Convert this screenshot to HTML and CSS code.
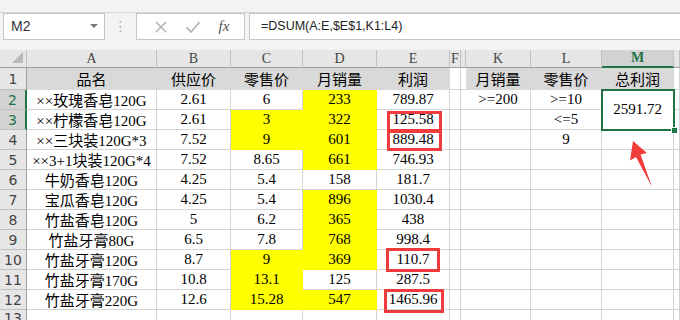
FILE: index.html
```html
<!DOCTYPE html>
<html lang="zh">

<head>
  <meta charset="UTF-8">
  <meta name="viewport" content="width=device-width, initial-scale=1.0">
  <title>DSUM 多条件求和</title>
  <link rel="stylesheet" href="styles.css">
</head>

<body>
  <!-- 编辑栏 -->
  <div class="ribbon"></div>
  <div class="fbar">
    <div class="namebox">M2<span class="caret"></span></div>
    <div class="grip">⋮</div>
    <div class="fx-buttons">
      <svg class="btn-icon" width="14" height="14" viewBox="0 0 14 14">
        <path d="M2 2 L12 12 M12 2 L2 12" stroke="#b5b5b5" stroke-width="1.6" fill="none" />
      </svg>
      <svg class="btn-icon" width="16" height="14" viewBox="0 0 16 14">
        <path d="M1.5 7.5 L6 12 L14.5 2" stroke="#b5b5b5" stroke-width="1.8" fill="none" />
      </svg>
      <span class="fx">fx</span>
    </div>
    <div class="formula">=DSUM(A:E,$E$1,K1:L4)</div>
  </div>

  <!-- 工作表 -->
  <div class="sheet">
    <div class="ch corner"><span class="tri"></span></div>
    <div class="ch">A</div>
    <div class="ch">B</div>
    <div class="ch">C</div>
    <div class="ch">D</div>
    <div class="ch">E</div>
    <div class="ch">F</div>
    <div class="ch"></div>
    <div class="ch">K</div>
    <div class="ch">L</div>
    <div class="ch sel">M</div>
    <div class="ch"></div>

    <div class="rh">1</div>
    <div class="c g">品名</div>
    <div class="c g">供应价</div>
    <div class="c g">零售价</div>
    <div class="c g">月销量</div>
    <div class="c g">利润</div>
    <div class="c"></div>
    <div class="c gap"></div>
    <div class="c g">月销量</div>
    <div class="c g">零售价</div>
    <div class="c g">总利润</div>
    <div class="c"></div>

    <div class="rh sel">2</div>
    <div class="c">××玫瑰香皂120G</div>
    <div class="c">2.61</div>
    <div class="c">6</div>
    <div class="c y">233</div>
    <div class="c">789.87</div>
    <div class="c"></div>
    <div class="c gap"></div>
    <div class="c">&gt;=200</div>
    <div class="c">&gt;=10</div>
    <div class="c merged">2591.72</div>
    <div class="c"></div>

    <div class="rh sel">3</div>
    <div class="c">××柠檬香皂120G</div>
    <div class="c">2.61</div>
    <div class="c y">3</div>
    <div class="c y">322</div>
    <div class="c">125.58</div>
    <div class="c"></div>
    <div class="c gap"></div>
    <div class="c"></div>
    <div class="c">&lt;=5</div>
    <div class="c"></div>

    <div class="rh">4</div>
    <div class="c">××三块装120G*3</div>
    <div class="c">7.52</div>
    <div class="c y">9</div>
    <div class="c y">601</div>
    <div class="c">889.48</div>
    <div class="c"></div>
    <div class="c gap"></div>
    <div class="c"></div>
    <div class="c">9</div>
    <div class="c"></div>
    <div class="c"></div>

    <div class="rh">5</div>
    <div class="c">××3+1块装120G*4</div>
    <div class="c">7.52</div>
    <div class="c">8.65</div>
    <div class="c y">661</div>
    <div class="c">746.93</div>
    <div class="c"></div>
    <div class="c gap"></div>
    <div class="c"></div>
    <div class="c"></div>
    <div class="c"></div>
    <div class="c"></div>

    <div class="rh">6</div>
    <div class="c">牛奶香皂120G</div>
    <div class="c">4.25</div>
    <div class="c">5.4</div>
    <div class="c">158</div>
    <div class="c">181.7</div>
    <div class="c"></div>
    <div class="c gap"></div>
    <div class="c"></div>
    <div class="c"></div>
    <div class="c"></div>
    <div class="c"></div>

    <div class="rh">7</div>
    <div class="c">宝瓜香皂120G</div>
    <div class="c">4.25</div>
    <div class="c">5.4</div>
    <div class="c y">896</div>
    <div class="c">1030.4</div>
    <div class="c"></div>
    <div class="c gap"></div>
    <div class="c"></div>
    <div class="c"></div>
    <div class="c"></div>
    <div class="c"></div>

    <div class="rh">8</div>
    <div class="c">竹盐香皂120G</div>
    <div class="c">5</div>
    <div class="c">6.2</div>
    <div class="c y">365</div>
    <div class="c">438</div>
    <div class="c"></div>
    <div class="c gap"></div>
    <div class="c"></div>
    <div class="c"></div>
    <div class="c"></div>
    <div class="c"></div>

    <div class="rh">9</div>
    <div class="c">竹盐牙膏80G</div>
    <div class="c">6.5</div>
    <div class="c">7.8</div>
    <div class="c y">768</div>
    <div class="c">998.4</div>
    <div class="c"></div>
    <div class="c gap"></div>
    <div class="c"></div>
    <div class="c"></div>
    <div class="c"></div>
    <div class="c"></div>

    <div class="rh">10</div>
    <div class="c">竹盐牙膏120G</div>
    <div class="c">8.7</div>
    <div class="c y">9</div>
    <div class="c y">369</div>
    <div class="c">110.7</div>
    <div class="c"></div>
    <div class="c gap"></div>
    <div class="c"></div>
    <div class="c"></div>
    <div class="c"></div>
    <div class="c"></div>

    <div class="rh">11</div>
    <div class="c">竹盐牙膏170G</div>
    <div class="c">10.8</div>
    <div class="c y">13.1</div>
    <div class="c">125</div>
    <div class="c">287.5</div>
    <div class="c"></div>
    <div class="c gap"></div>
    <div class="c"></div>
    <div class="c"></div>
    <div class="c"></div>
    <div class="c"></div>

    <div class="rh">12</div>
    <div class="c">竹盐牙膏220G</div>
    <div class="c">12.6</div>
    <div class="c y">15.28</div>
    <div class="c y">547</div>
    <div class="c">1465.96</div>
    <div class="c"></div>
    <div class="c gap"></div>
    <div class="c"></div>
    <div class="c"></div>
    <div class="c"></div>
    <div class="c"></div>

    <div class="rh">13</div>
    <div class="c"></div>
    <div class="c"></div>
    <div class="c"></div>
    <div class="c"></div>
    <div class="c"></div>
    <div class="c"></div>
    <div class="c gap"></div>
    <div class="c"></div>
    <div class="c"></div>
    <div class="c"></div>
    <div class="c"></div>

    <!-- 标注 -->
    <div class="mark mark-e3"></div>
    <div class="mark mark-e4"></div>
    <div class="mark mark-e10"></div>
    <div class="mark mark-e12"></div>
    <div class="selection"><span class="handle"></span></div>
    <svg class="arrow" width="40" height="52" viewBox="0 0 40 52">
      <polygon points="13,3 27,15 20.5,16.5 32,49 16,19 10,22.5" fill="#f23b3b" />
    </svg>
  </div>
</body>

</html>
```

FILE: styles.css
```css
* {
  box-sizing: border-box;
  margin: 0;
  padding: 0;
}

body {
  width: 680px;
  height: 320px;
  overflow: hidden;
  background-color: #ffffff;
  color: #000000;
  font-family: "Liberation Serif", "Noto Sans CJK SC", serif;
}

/* 编辑栏 */
.ribbon {
  height: 13px;
  background-color: #f3f3f3;
  border-bottom: 1px solid #d5d5d5;
}

.fbar {
  display: flex;
  align-items: flex-start;
  height: 37px;
  padding-left: 3px;
  background-color: #f3f3f3;
}

.namebox {
  position: relative;
  width: 102px;
  height: 27px;
  padding-left: 7px;
  border: 1px solid #c6c6c6;
  background-color: #ffffff;
  color: #333333;
  font: 14px/25px "Liberation Sans", sans-serif;
}

.caret {
  position: absolute;
  right: 6px;
  top: 10px;
  border-left: 4px solid transparent;
  border-right: 4px solid transparent;
  border-top: 4px solid #7a7a7a;
}

.grip {
  width: 31px;
  text-align: center;
  color: #b0b0b0;
  font: 14px/27px "DejaVu Sans", sans-serif;
}

.fx-buttons {
  display: flex;
  align-items: center;
  justify-content: space-around;
  width: 109px;
  height: 27px;
  padding: 0 6px 0 8px;
  border: 1px solid #c6c6c6;
  background-color: #ffffff;
}

.fx {
  color: #555555;
  font: italic 15px "Liberation Serif", serif;
}

.formula {
  flex: 1;
  height: 27px;
  margin-left: 4px;
  padding-left: 11px;
  border: 1px solid #c6c6c6;
  border-right: none;
  background-color: #ffffff;
  color: #222222;
  font: 12.5px/25px "Liberation Sans", sans-serif;
}

/* 工作表 */
.sheet {
  position: relative;
  display: grid;
  grid-template-columns: 27px 130px 74px 72px 74px 73px 11px 5px 65px 71px 72px 1fr;
  grid-template-rows: 18px 22px repeat(11, 20px) 1fr;
  height: 270px;
}

.ch {
  display: flex;
  align-items: center;
  justify-content: center;
  background-color: #e6e6e6;
  border-right: 1px solid #c0c0c0;
  border-bottom: 1px solid #9e9e9e;
  color: #444444;
  font-size: 14px;
}

.ch.sel {
  background-color: #d2d2d2;
  color: #217346;
  border-bottom: 2px solid #217346;
  font-weight: bold;
}

.corner {
  position: relative;
}

.tri {
  position: absolute;
  right: 3px;
  bottom: 4px;
  border-left: 11px solid transparent;
  border-bottom: 11px solid #b9b9b9;
}

.rh {
  display: flex;
  align-items: center;
  justify-content: center;
  background-color: #e6e6e6;
  border-right: 1px solid #9e9e9e;
  border-bottom: 1px solid #c0c0c0;
  color: #444444;
  font: 14px "DejaVu Sans", sans-serif;
}

.rh.sel {
  background-color: #d2d2d2;
  color: #217346;
  border-right: 2px solid #217346;
}

.c {
  display: flex;
  align-items: center;
  justify-content: center;
  white-space: nowrap;
  border-right: 1px solid #d4d4d4;
  border-bottom: 1px solid #d4d4d4;
  font-size: 15px;
}

.c.gap {
  border-right: none;
}

.c.g {
  background-color: #d9d9d9;
  border-color: #d9d9d9;
}

.c.y {
  background-color: #ffff00;
  border-color: #ffff00;
}

.c.merged {
  grid-row: span 2;
}

/* 标注：红框、选区、箭头 */
.mark {
  position: absolute;
  border: 3px solid #ee3b3e;
}

.mark-e3 {
  left: 387px;
  top: 61px;
  width: 55px;
  height: 21px;
}

.mark-e4 {
  left: 387px;
  top: 80px;
  width: 55px;
  height: 21px;
}

.mark-e10 {
  left: 386px;
  top: 198px;
  width: 54px;
  height: 24px;
}

.mark-e12 {
  left: 384px;
  top: 239px;
  width: 60px;
  height: 24px;
}

.selection {
  position: absolute;
  left: 601px;
  top: 39px;
  width: 74px;
  height: 42px;
  border: 2px solid #217346;
}

.handle {
  position: absolute;
  right: -5px;
  bottom: -5px;
  width: 7px;
  height: 7px;
  background-color: #217346;
  border: 1px solid #ffffff;
}

.arrow {
  position: absolute;
  left: 620px;
  top: 88px;
}
```
